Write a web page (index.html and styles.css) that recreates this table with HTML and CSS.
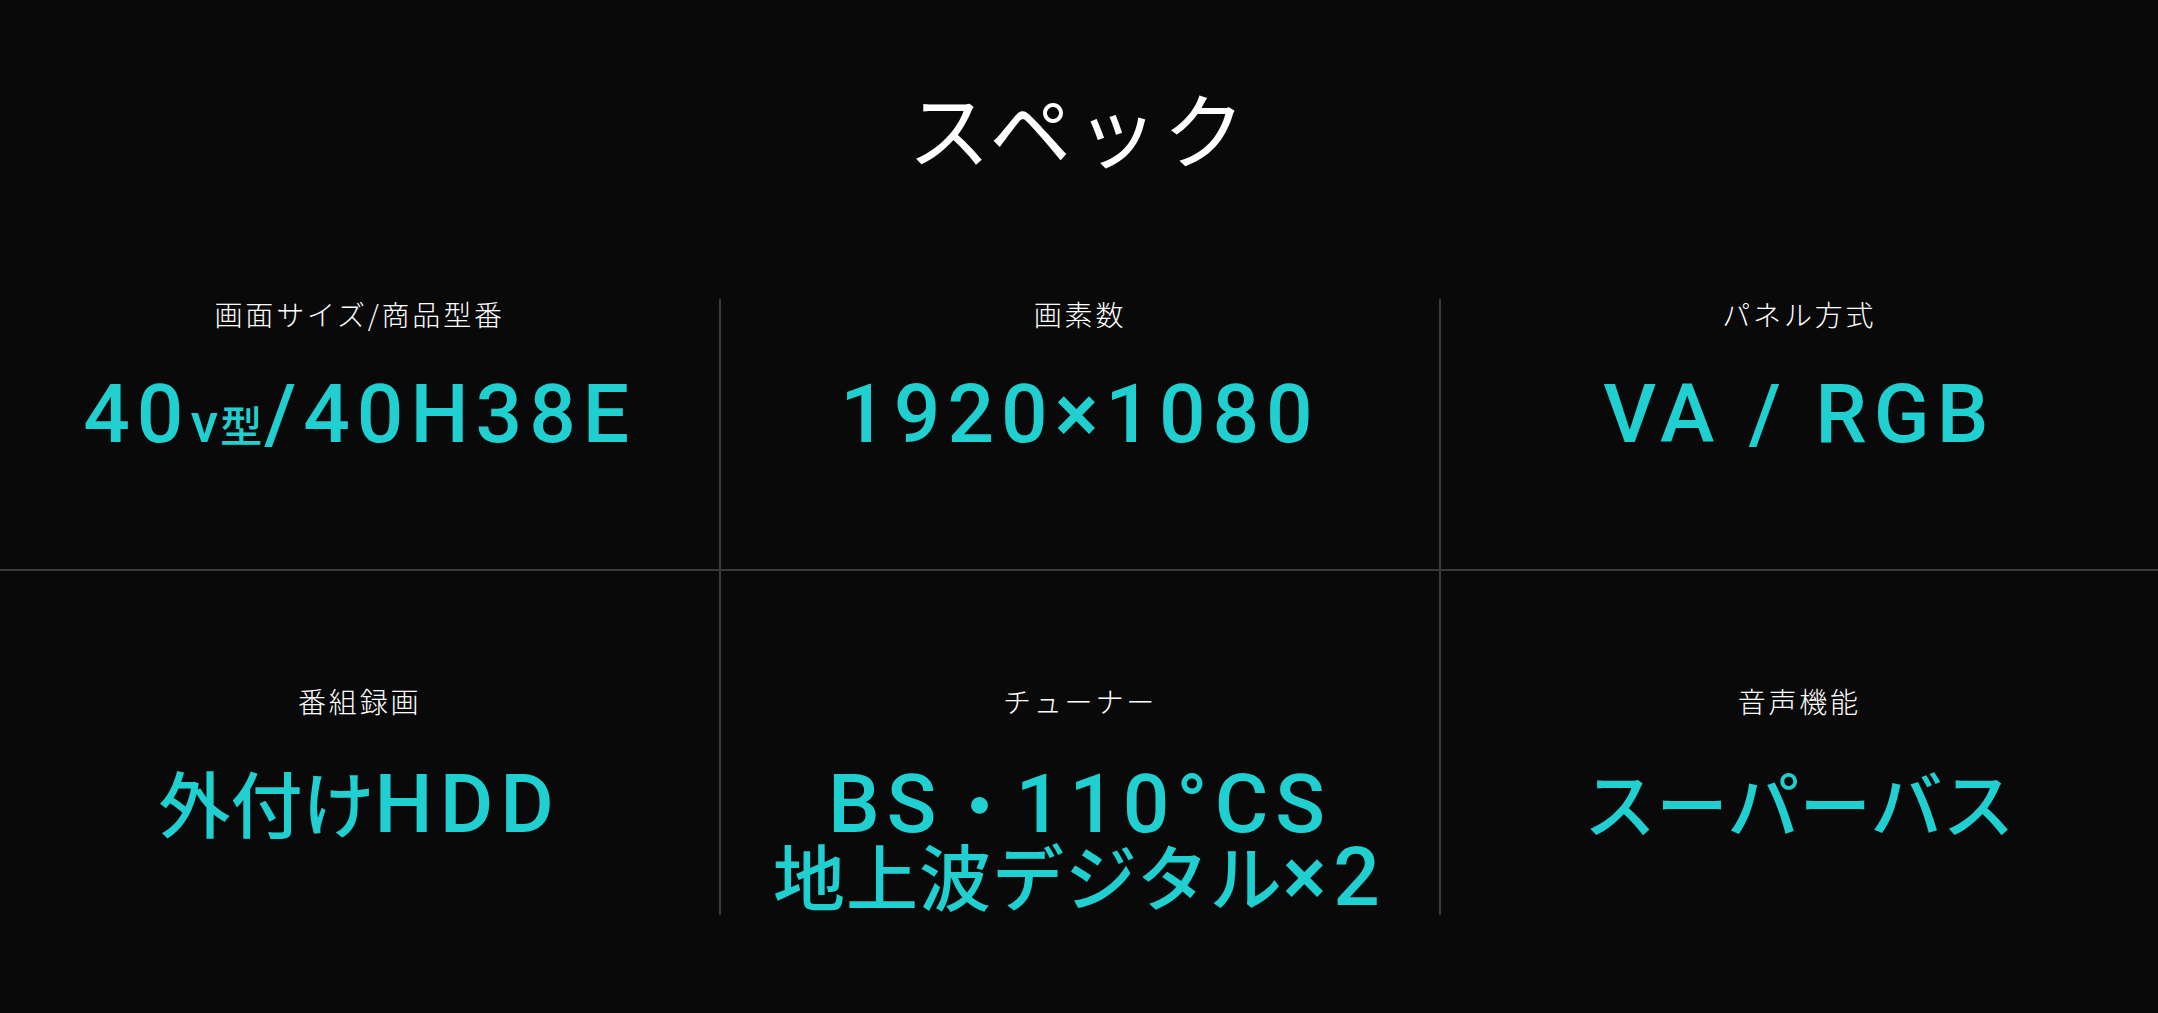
FILE: index.html
```html
<!DOCTYPE html>
<html lang="ja">
<head>
<meta charset="utf-8">
<title>スペック</title>
<link rel="stylesheet" href="styles.css">
</head>
<body>
<section class="spec">
  <h1 class="spec-title">スペック</h1>
  <div class="spec-grid">
    <div class="cell top first">
      <p class="label">画面サイズ/商品型番</p>
      <p class="value">40<span class="unit-v">v</span><span class="unit">型</span>/40H38E</p>
    </div>
    <div class="cell top">
      <p class="label">画素数</p>
      <p class="value">1920×1080</p>
    </div>
    <div class="cell top">
      <p class="label">パネル方式</p>
      <p class="value">VA / RGB</p>
    </div>
    <div class="cell bottom first">
      <p class="label">番組録画</p>
      <p class="value"><span class="ja">外付け</span>HDD</p>
    </div>
    <div class="cell bottom">
      <p class="label">チューナー</p>
      <p class="value">BS<span class="ja">・</span>110°CS<br><span class="ja wide">地上波デジタル</span>×2</p>
    </div>
    <div class="cell bottom">
      <p class="label">音声機能</p>
      <p class="value"><span class="ja">スーパーバス</span></p>
    </div>
  </div>
</section>
</body>
</html>
```

FILE: styles.css
```css
html, body {
  margin: 0;
  padding: 0;
}
body {
  background: #090909;
  color: #ffffff;
  font-family: "Noto Sans CJK JP", "Noto Sans", sans-serif;
  width: 2158px;
  height: 1013px;
  overflow: hidden;
}
.spec-title {
  margin: 86px 0 0;
  font-size: 82px;
  line-height: 82px;
  font-weight: 400;
  text-align: center;
  letter-spacing: 0.06em;
}
.spec-grid {
  margin-top: 131px;
  display: grid;
  grid-template-columns: repeat(3, 1fr);
}
.cell {
  text-align: center;
  border-left: 2px solid #3a3a3a;
}
.cell.first {
  border-left: none;
}
.cell.top {
  padding-bottom: 110px;
  border-bottom: 2px solid #3a3a3a;
}
.cell.bottom {
  padding-top: 115px;
  padding-bottom: 3px;
}
.label {
  margin: 0;
  font-size: 28px;
  line-height: 30px;
  font-weight: 300;
  letter-spacing: 0.1em;
}
.value {
  margin: 50px 0 0;
  font-family: "Roboto", "Noto Sans CJK JP", sans-serif;
  font-size: 82px;
  line-height: 70px;
  font-weight: 500;
  color: #20cfcf;
  letter-spacing: 7px;
}
.ja {
  font-family: "Noto Sans CJK JP", sans-serif;
  font-size: 72px;
  letter-spacing: 0;
}
.ja.wide {
  letter-spacing: 1px;
}
.unit-v {
  font-size: 56px;
  letter-spacing: 2px;
}
.unit {
  font-family: "Noto Sans CJK JP", sans-serif;
  font-size: 42px;
  letter-spacing: 2px;
}
```
